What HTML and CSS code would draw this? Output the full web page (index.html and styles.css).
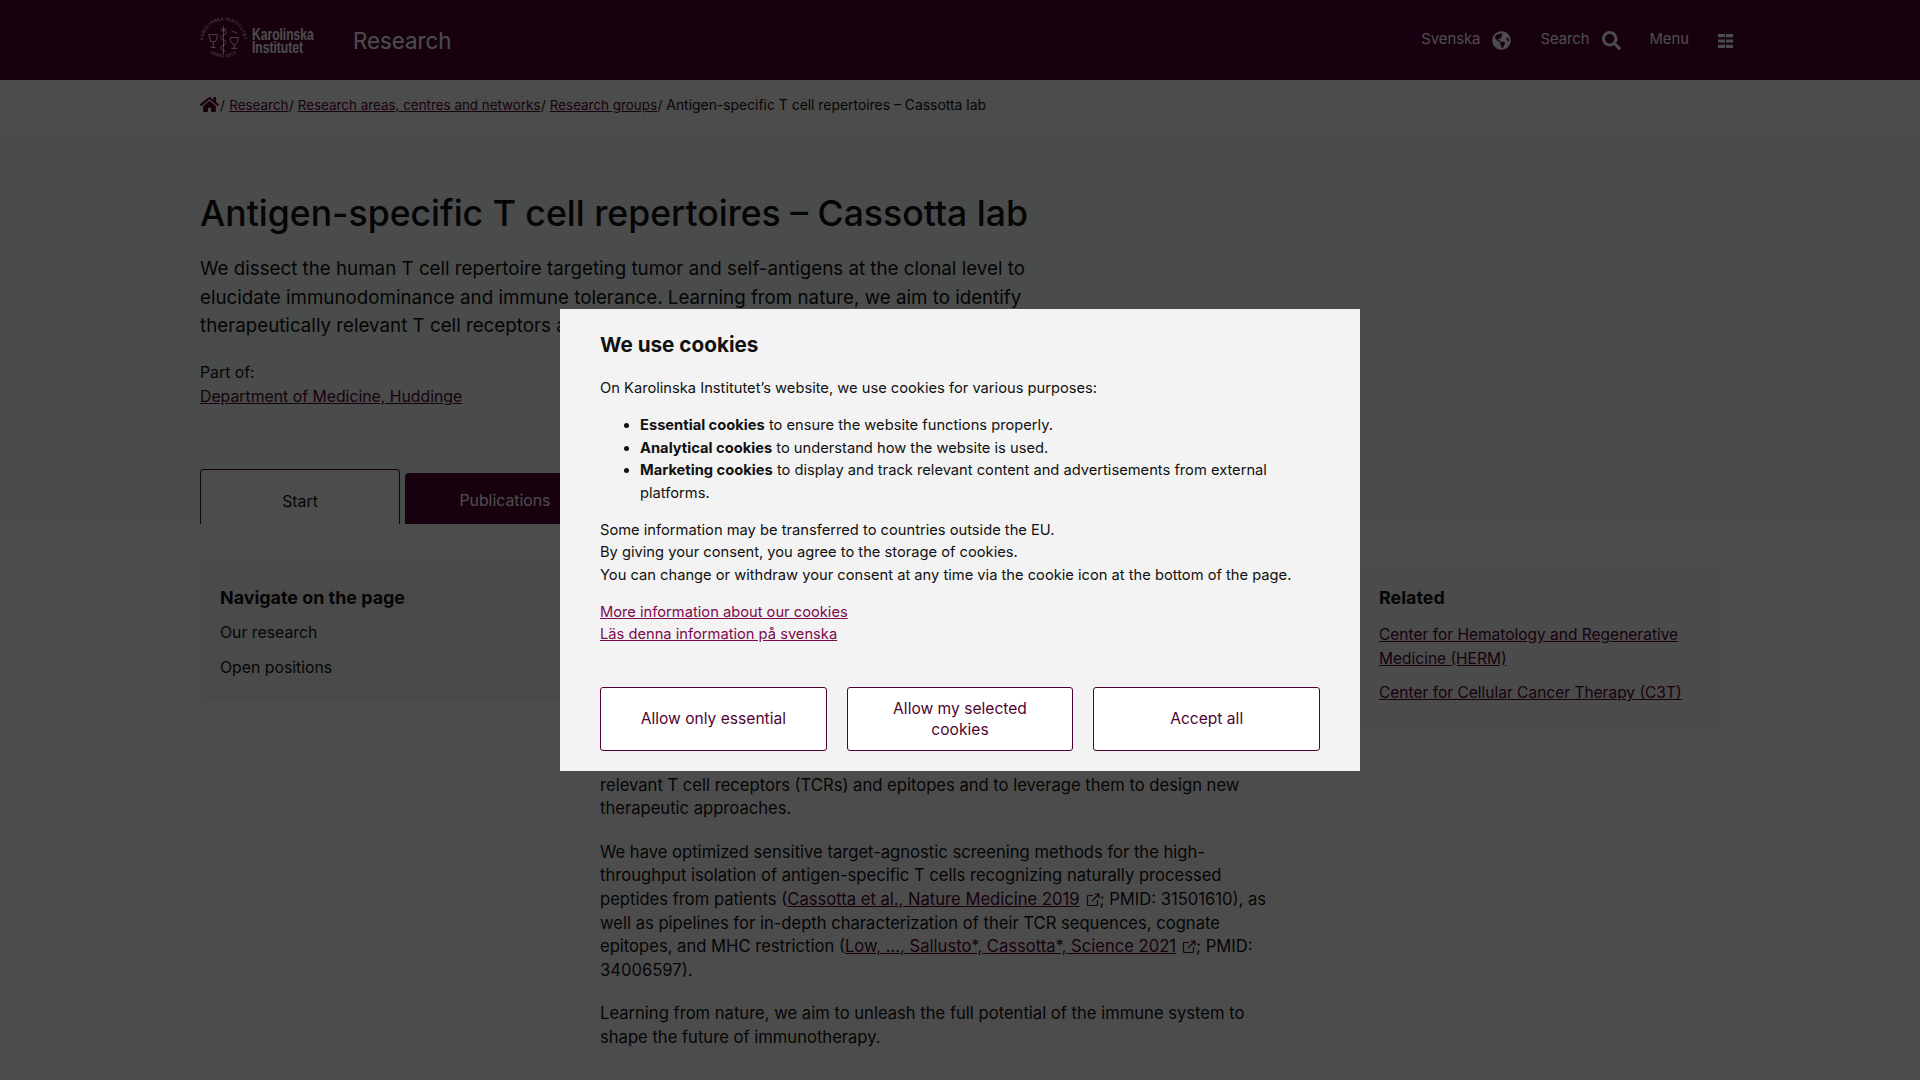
FILE: index.html
```html
<!DOCTYPE html>
<html lang="en">
<head>
<meta charset="utf-8">
<title>Antigen-specific T cell repertoires – Cassotta lab</title>
<link rel="stylesheet" href="styles.css">
</head>
<body>
<header class="topbar">
  <div class="wrap topbar-in">
    <a class="logo" href="#">
      <svg class="seal" width="47" height="47" viewBox="0 0 48 48" aria-hidden="true">
        <defs>
          <path id="ringtop" d="M7.600 36.500A20.600 20.600 0 1 1 40.400 36.500"/>
          <path id="ringbot" d="M7 33.500A22.800 22.800 0 0 0 41 33.500"/>
        </defs>
        <text class="seal-txt"><textPath href="#ringtop" startOffset="50%" text-anchor="middle">KAROLINSKA INSTITUTET</textPath></text>
        <text class="seal-txt"><textPath href="#ringbot" startOffset="50%" text-anchor="middle">ANNO 1810</textPath></text>
        <path class="seal-ln" d="M24 9v29M21 12c4 1 6 2 6 4s-6 3-6 5 6 3 6 5-6 3-6 5 3 3 5 4M27 12c-3 1-5 2-5 3M9 18h9l-2 7h-5zM13.500 25v6M11 31h5M31 21h8c0 4-1 7-4 7s-4-3-4-7zM35 28v4M32 32h6M32 14c2 2 5 1 6 3"/>
      </svg>
      <span class="logo-txt">Karolinska<br>Institutet</span>
    </a>
    <span class="site">Research</span>
    <nav class="tools">
      <a class="tool" href="#">Svenska
        <svg width="19" height="19" viewBox="0 0 496 512" aria-hidden="true"><path d="M248 8C111.030 8 0 119.030 0 256s111.030 248 248 248 248-111.030 248-248S384.970 8 248 8zm82.290 357.600c-3.900 3.880-7.990 7.950-11.310 11.280-2.990 3-5.100 6.700-6.170 10.710-1.510 5.660-2.730 11.380-4.770 16.870l-17.390 46.850c-13.760 3-28 4.690-42.650 4.690v-27.380c1.690-12.620-7.640-36.260-22.630-51.250-6-6-9.370-14.140-9.370-22.630v-32.010c0-11.640-6.270-22.340-16.460-27.970-14.370-7.950-34.810-19.060-48.810-26.110-11.480-5.780-22.100-13.140-31.650-21.750l-.8-.72a114.792 114.792 0 0 1-18.060-20.740c-9.380-13.770-24.660-36.420-34.590-51.140 20.470-45.500 57.360-82.040 103.200-101.890l24.010 12.010C203.480 89.740 216 82.010 216 70.110v-11.300c7.990-1.290 16.120-2.110 24.430-2.410l28.300 28.300c6.250 6.250 6.250 16.380 0 22.630L264 112l-10.340 10.340c-3.120 3.120-3.120 8.190 0 11.310l4.690 4.690c3.120 3.120 3.120 8.190 0 11.310l-8 8a8.008 8.008 0 0 1-5.660 2.340h-8.990c-2.080 0-4.080.81-5.580 2.270l-9.920 9.650a8.008 8.008 0 0 0-1.580 9.310l15.590 31.190c2.660 5.320-1.210 11.580-7.150 11.580h-5.640c-1.930 0-3.790-.7-5.240-1.960l-9.280-8.060a16.017 16.017 0 0 0-15.550-3.100l-31.170 10.390a11.950 11.950 0 0 0-8.170 11.340c0 4.530 2.560 8.660 6.610 10.690l11.080 5.540c9.410 4.710 19.790 7.160 30.310 7.160s22.590 27.290 32 32h66.750c8.490 0 16.620 3.370 22.630 9.370l13.690 13.690a30.503 30.503 0 0 1 8.930 21.570 46.536 46.536 0 0 1-13.720 32.980zM417 274.250c-5.790-1.450-10.840-5-14.150-9.970l-17.980-26.970a23.970 23.970 0 0 1 0-26.620l19.590-29.380c2.320-3.470 5.500-6.280 9.240-8.150l12.980-6.490C440.200 193.590 448 223.870 448 256c0 8.670-.74 17.160-1.820 25.540L417 274.250z"/></svg>
      </a>
      <a class="tool" href="#">Search
        <svg width="19" height="19" viewBox="0 0 512 512" aria-hidden="true"><path d="M505 442.700L405.300 343c-4.500-4.500-10.600-7-17-7H372c27.600-35.300 44-79.700 44-128C416 93.100 322.900 0 208 0S0 93.100 0 208s93.100 208 208 208c48.300 0 92.700-16.400 128-44v16.300c0 6.400 2.500 12.500 7 17l99.700 99.700c9.400 9.400 24.600 9.400 33.900 0l28.300-28.300c9.400-9.400 9.400-24.600.1-34zM208 336c-70.700 0-128-57.200-128-128 0-70.700 57.200-128 128-128 70.700 0 128 57.200 128 128 0 70.700-57.200 128-128 128z"/></svg>
      </a>
      <a class="tool menu" href="#">Menu
        <svg width="15" height="14" viewBox="0 0 15 14" aria-hidden="true"><path d="M0 0h7v3.200H0zM8 0h7v3.200H8zM0 5.400h7v3.200H0zM8 5.400h7v3.200H8zM0 10.800h7V14H0zM8 10.800h7V14H8z"/></svg>
      </a>
    </nav>
  </div>
</header>

<div class="crumbs">
  <div class="wrap crumbs-in">
    <svg width="19" height="17" viewBox="0 0 576 512" aria-hidden="true"><path d="M280.370 148.260L96 300.110V464a16 16 0 0 0 16 16l112.060-.29a16 16 0 0 0 15.920-16V368a16 16 0 0 1 16-16h64a16 16 0 0 1 16 16v95.640a16 16 0 0 0 16 16.050L464 480a16 16 0 0 0 16-16V300L295.670 148.260a12.190 12.190 0 0 0-15.300 0zM571.600 251.470L488 182.560V44.050a12 12 0 0 0-12-12h-56a12 12 0 0 0-12 12v72.610L318.470 43a48 48 0 0 0-61 0L4.340 251.470a12 12 0 0 0-1.600 16.900l25.500 31A12 12 0 0 0 45.150 301l235.220-193.740a12.190 12.190 0 0 1 15.300 0L530.900 301a12 12 0 0 0 16.900-1.600l25.500-31a12 12 0 0 0-1.700-16.930z"/></svg>
    <span class="sep">/</span><a href="#">Research</a><span class="sep">/</span><a href="#">Research areas, centres and networks</a><span class="sep">/</span><a href="#">Research groups</a><span class="sep">/</span><span class="here">Antigen-specific T cell repertoires – Cassotta lab</span>
  </div>
</div>

<section class="hero">
  <div class="wrap hero-in">
    <h1>Antigen-specific T cell repertoires – Cassotta lab</h1>
    <p class="lead">We dissect the human T cell repertoire targeting tumor and self-antigens at the clonal level to elucidate immunodominance and immune tolerance. Learning from nature, we aim to identify therapeutically relevant T cell receptors and epitopes for new therapeutic approaches.</p>
    <p class="part">Part of:<br><a href="#">Department of Medicine, Huddinge</a></p>
    <div class="tabs">
      <a class="tab on" href="#">Start</a>
      <a class="tab" href="#">Publications</a>
    </div>
  </div>
</section>

<main class="wrap layout">
  <aside class="box nav">
    <h2>Navigate on the page</h2>
    <ul>
      <li>Our research</li>
      <li>Open positions</li>
    </ul>
  </aside>
  <article class="body">
    <h2>Our research</h2>
    <p>Our lab studies how the human T cell repertoire recognizes tumor and self-antigens. We aim to identify therapeutically<br>relevant T cell receptors (TCRs) and epitopes and to leverage them to design new therapeutic approaches.</p>
    <p>We have optimized sensitive target-agnostic screening methods for the high-throughput isolation of antigen-specific T cells recognizing naturally processed peptides from patients (<a href="#">Cassotta et al., Nature Medicine 2019</a><svg class="ext" width="14" height="14" viewBox="0 0 14 14" aria-hidden="true"><path d="M7 2.500H2.500a1 1 0 0 0-1 1v8a1 1 0 0 0 1 1h8a1 1 0 0 0 1-1V7M8.500 1h4.500v4.500M13 1 6 8"/></svg>; PMID: 31501610), as well as pipelines for in-depth characterization of their TCR sequences, cognate epitopes, and MHC restriction (<a href="#">Low, ..., Sallusto*, Cassotta*, Science 2021</a><svg class="ext" width="14" height="14" viewBox="0 0 14 14" aria-hidden="true"><path d="M7 2.500H2.500a1 1 0 0 0-1 1v8a1 1 0 0 0 1 1h8a1 1 0 0 0 1-1V7M8.500 1h4.500v4.500M13 1 6 8"/></svg>; PMID: 34006597).</p>
    <p>Learning from nature, we aim to unleash the full potential of the immune system to shape the future of immunotherapy.</p>
  </article>
  <aside class="box rel">
    <h2>Related</h2>
    <ul>
      <li><a href="#">Center for Hematology and Regenerative Medicine (HERM)</a></li>
      <li><a href="#">Center for Cellular Cancer Therapy (C3T)</a></li>
    </ul>
  </aside>
</main>

<div class="overlay"></div>
<div class="modal" role="dialog">
  <h2>We use cookies</h2>
  <p>On Karolinska Institutet’s website, we use cookies for various purposes:</p>
  <ul>
    <li><b>Essential cookies</b> to ensure the website functions properly.</li>
    <li><b>Analytical cookies</b> to understand how the website is used.</li>
    <li><b>Marketing cookies</b> to display and track relevant content and advertisements from external platforms.</li>
  </ul>
  <p>Some information may be transferred to countries outside the EU.<br>By giving your consent, you agree to the storage of cookies.<br>You can change or withdraw your consent at any time via the cookie icon at the bottom of the page.</p>
  <p class="links"><a href="#">More information about our cookies</a><br><a href="#">Läs denna information på svenska</a></p>
  <div class="btns">
    <button>Allow only essential</button>
    <button>Allow my selected cookies</button>
    <button>Accept all</button>
  </div>
</div>
</body>
</html>
```

FILE: styles.css
```css
* { box-sizing: border-box; }
html, body { margin: 0; height: 100%; overflow: hidden; }
body { font-family: Inter, "Noto Sans", sans-serif; color: #111; background: #fff; font-size: 15.800px; }
a { color: #4f0433; }
.wrap { width: 1520px; margin: 0 auto; }

.topbar { height: 80px; background: #4f0433; color: #fff; }
.topbar-in { height: 80px; display: flex; align-items: center; }
.logo { display: flex; align-items: center; gap: 5px; text-decoration: none; color: #fff; width: 153px; }
.seal { flex: none; }
.seal-txt { font: 4.500px "Liberation Sans", sans-serif; fill: #fff; letter-spacing: .4px; }
.seal-ln { fill: none; stroke: #fff; stroke-width: .9; }
.logo-txt { font: bold 17px/13px "Liberation Sans", sans-serif; display: block; color: #fff; transform: scaleX(.71); transform-origin: left center; white-space: nowrap; margin-top: 1px; }
.site { font-size: 22.300px; color: #fff; }
.tools { margin-left: auto; margin-right: -13px; margin-bottom: 2px; display: flex; gap: 29px; }
.tool { display: flex; align-items: center; gap: 12px; color: #fff; text-decoration: none; font-size: 14.800px; }
.tool svg { fill: #fff; margin-top: 3px; }
.tool.menu { gap: 29px; }

.crumbs { height: 52px; background: #fff; font-size: 13.400px; }
.crumbs-in { height: 52px; display: flex; align-items: center; white-space: pre; padding-bottom: 3px; }
.crumbs svg { fill: #4f0433; margin-top: -1px; }
.sep { margin: 0 4px 0 .5px; }
.crumbs svg + .sep { margin-left: 1px; margin-right: 4.500px; }
.here { font-size: 13.900px; }

.hero { background: #f7fbfa; height: 392px; }
.hero-in { height: 392px; padding-top: 60px; display: flex; flex-direction: column; }
h1 { font-size: 35.600px; line-height: 44px; font-weight: 500; margin: 0 0 19px; }
.lead { font-size: 18.750px; line-height: 28.500px; width: 860px; margin: 0 0 20px; }
.part { margin: 0; line-height: 24px; }
.tabs { display: flex; gap: 5px; align-items: flex-end; margin-top: auto; }
.tab { width: 200px; height: 51px; background: #4f0433; color: #fff; text-decoration: none; border-radius: 4px 4px 0 0; display: flex; align-items: center; justify-content: center; padding-top: 4px; }
.tab.on { height: 55px; background: #fff; color: #111; border: 1px solid #4f0433; border-bottom: 0; padding-top: 9px; }

.layout { display: grid; grid-template-columns: 361px 721px 360px; column-gap: 39px; justify-content: start; padding-top: 39px; align-items: start; }
.box { border-radius: 4px; padding: 20px; }
.nav { background: #f7f9f8; height: 137px; padding-top: 22px; }
.rel { background: #fbfbfb; border: 1px solid #f5f5f5; margin-top: 1px; padding: 20px 18px; }
.box h2 { font-size: 17.900px; line-height: 26px; margin: 0 0 5px; font-weight: 700; }
.box ul { list-style: none; margin: 0; padding: 0; }
.box li { padding: 5px 0; line-height: 23.500px; border-top: 1px solid #ececec; }
.box li:first-child { border-top: 0; }
.rel h2 { margin-bottom: 7px; }
.rel li { font-size: 15.500px; }

.body { font-size: 16.600px; line-height: 23.600px; padding-right: 41px; }
.body h2 { font-size: 24px; margin: 0 0 131.500px; line-height: 32px; font-weight: 500; }
.body p { margin: 0 0 20px; }
.ext { fill: none; stroke: #4f0433; stroke-width: 1.200; margin: 0 0 -2px 6px; }

.overlay { position: fixed; inset: 0; background: rgba(0,0,0,.7); }
.modal { position: fixed; left: 560px; top: 309px; width: 800px; height: 462px; background: #f3f3f3; padding: 21px 40px 0; }
.modal h2 { font-size: 20.700px; line-height: 30px; margin: 0 0 17px; font-weight: 700; }
.modal p, .modal ul { margin: 0 0 14.500px; line-height: 22.500px; font-size: 14.700px; }
.modal ul { padding-left: 40px; }
.links a { color: #7d0a4e; }
.btns { display: grid; grid-template-columns: repeat(3, 1fr); gap: 20px; margin-top: 41px; }
.btns button { height: 64px; background: #fff; border: 1px solid #4f0433; border-radius: 3px; color: #4f0433; font: 15.600px/21px Inter, sans-serif; padding: 0 30px; }
```
